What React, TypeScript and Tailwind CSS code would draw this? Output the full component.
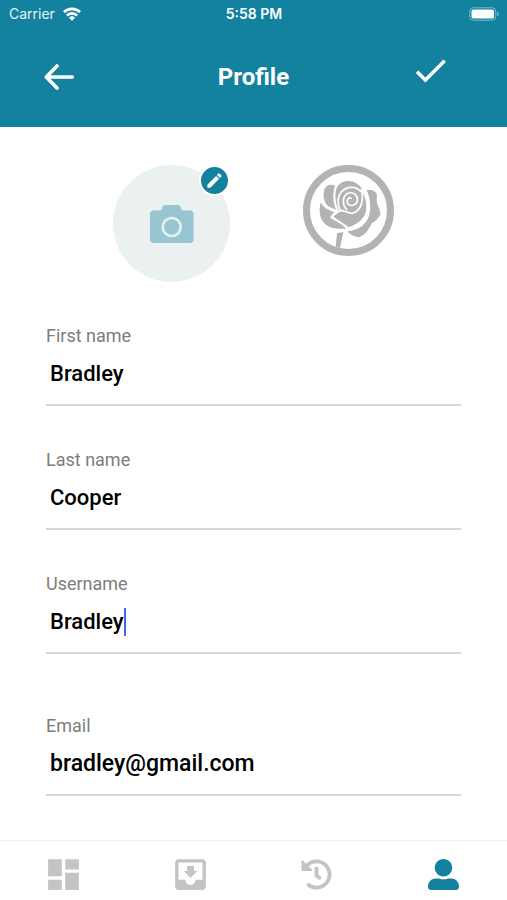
import { useState } from "react";
import { FaHistory, FaUserAlt } from "react-icons/fa";
import { MdCheck, MdDashboard, MdModeEdit, MdMoveToInbox } from "react-icons/md";

type FieldKey = "firstName" | "lastName" | "username" | "email";

const FIELDS: { key: FieldKey; label: string; type: string }[] = [
  { key: "firstName", label: "First name", type: "text" },
  { key: "lastName", label: "Last name", type: "text" },
  { key: "username", label: "Username", type: "text" },
  { key: "email", label: "Email", type: "email" },
];

const TABS = [
  { name: "Dashboard", Icon: MdDashboard, size: 41 },
  { name: "Inbox", Icon: MdMoveToInbox, size: 41 },
  { name: "History", Icon: FaHistory, size: 31 },
  { name: "Profile", Icon: FaUserAlt, size: 31 },
];

function StatusBar() {
  return (
    <div className="grid grid-cols-3 items-center h-7 pl-[9px] pr-2 font-['Inter',sans-serif] text-sm text-white">
      <div className="flex items-center gap-2">
        <span className="opacity-90">Carrier</span>
        <svg width="18" height="14" viewBox="0 0 18 14" fill="none" stroke="currentColor" strokeWidth="2.6">
          <path d="M.9 5.2a11.5 11.5 0 0 1 16.2 0" />
          <path d="M3.8 8.5a7.4 7.4 0 0 1 10.4 0" />
          <path d="M9 13.8l-3-3.1a4.3 4.3 0 0 1 6 0z" fill="currentColor" stroke="none" />
        </svg>
      </div>
      <span className="text-center font-semibold">5:58 PM</span>
      <svg className="justify-self-end" width="30" height="14" viewBox="0 0 30 14">
        <rect x="0.8" y="0.8" width="26" height="12.4" rx="3.6" fill="none" stroke="#fff" strokeOpacity="0.45" />
        <rect x="2.5" y="2.5" width="22.6" height="9" rx="2" fill="#fff" />
        <path d="M28.2 4.8c1.8.6 1.8 3.8 0 4.4z" fill="#fff" fillOpacity="0.5" />
      </svg>
    </div>
  );
}

function CameraIcon() {
  return (
    <svg width="44" height="38" viewBox="0 0 44 38">
      <path
        d="M3.5 5.5h6.3c1 0 1.7-.5 2-1.5l.6-2C12.8.7 13.5 0 15 0h13c1.5 0 2.200.7 2.600 2l.6 2c.3 1 1 1.500 2 1.500h6.800c2.200 0 3.500 1.300 3.500 3.500v25.500c0 2.200-1.300 3.500-3.500 3.500h-36.500C1.300 38 0 36.700 0 34.500V9c0-2.200 1.300-3.500 3.500-3.500z"
        fill="#96c6d2"
      />
      <circle cx="21.7" cy="22" r="9" fill="none" stroke="#ebf0f1" strokeWidth="2.6" />
    </svg>
  );
}

function RoseIcon() {
  return (
    <svg width="91" height="91" viewBox="26 29 273 273" fill="#b3b3b3">
      <circle cx="162.5" cy="165.5" r="126" fill="none" stroke="#b3b3b3" strokeWidth="21" />
      {/* outer petals */}
      <path d="M122 91C106 84 92 92 89 107c-4 20 2 38 16 47l20 9c-9-24-11-48-3-72z" />
      <path d="M79 141c-6 26-4 52 16 67 14 11 36 14 60 12-10-14-30-22-48-33l12-17c-16-5-32-13-40-29z" />
      <path d="M217 105c15-4 29 2 31 16-3 13 0 25 5 35l6 20c-6 12-15 21-27 28-8 19-20 35-38 42-14-2-28-8-34-18 32-4 56-20 64-46 7-24 4-53-7-77z" />
      {/* bud, wrapped by its outer fold */}
      <path d="M126 100c9-24 40-29 60-16 20 12 30 33 29 57l-40 36-41-8c-8-20-15-45-8-69z" />
      {/* front petal */}
      <path
        d="M113 182c11-5 17-15 28-17 12 2 22 10 34 9 20-7 30-28 29-55l-3-17c18 24 24 58 9 84-10 15-29 28-49 32-12-14-34-20-48-36z"
        stroke="#fff"
        strokeWidth="5"
        strokeLinejoin="round"
      />
      <g fill="none" stroke="#fff" strokeWidth="5" strokeLinecap="round">
        <path d="M138 167c-9-20-9-42 3-57 16-18 45-18 57-2" />
        <path d="M157 163c-14-16-13-42 4-49 16-6 30 6 28 21-2 15-22 21-29 9-5-10 3-19 10-15" />
      </g>
      <path d="M128 234l19-4-10 48-13-3z" />
    </svg>
  );
}

interface FieldProps {
  id: string;
  label: string;
  type: string;
  value: string;
  active: boolean;
  onChange: (value: string) => void;
  onFocus: () => void;
}

function Field({ id, label, type, value, active, onChange, onFocus }: FieldProps) {
  return (
    <div className="flex flex-col last:mt-[18px]">
      <label htmlFor={id} className="text-lg leading-6 text-[#7d7d7d]">
        {label}
      </label>
      <div className="flex items-center pt-3 pb-4 pl-1 border-b-2 border-[#d6d6d6]">
        <input
          id={id}
          type={type}
          value={value}
          onChange={(e) => onChange(e.target.value)}
          onFocus={onFocus}
          className={`h-7 p-0 leading-7 font-medium text-black bg-transparent outline-none caret-transparent ${
            type === "email" ? "text-[23px]" : "text-[22px]"
          } ${active ? "field-sizing-content" : "w-full"}`}
        />
        {active && <span className="w-0.5 h-7 bg-[#4169e1]" />}
      </div>
    </div>
  );
}

export default function App() {
  const [profile, setProfile] = useState<Record<FieldKey, string>>({
    firstName: "Bradley",
    lastName: "Cooper",
    username: "Bradley",
    email: "bradley@gmail.com",
  });
  const [activeField, setActiveField] = useState<FieldKey>("username");
  const [tab, setTab] = useState("Profile");

  return (
    <div className="flex flex-col min-h-screen bg-white font-['Roboto',sans-serif]">
      <header className="bg-[#13829e]">
        <StatusBar />
        <div className="grid grid-cols-3 items-center px-11 pt-[22px] pb-6">
          <button type="button" aria-label="Back" className="justify-self-start">
            <svg width="31" height="26" viewBox="0 0 31 26" fill="none" stroke="#fff" strokeWidth="3.6" strokeLinecap="round" strokeLinejoin="round">
              <path d="M28.3 13H2.5M13 2L2.3 13 13 24" />
            </svg>
          </button>
          <h1 className="text-2xl font-bold text-white text-center">Profile</h1>
          <button type="button" aria-label="Save" className="justify-self-end pr-3 pb-3 text-white">
            <MdCheck size={41} />
          </button>
        </div>
      </header>

      <main className="flex-1 px-[46px] pt-[38px] pb-10">
        <div className="flex justify-center gap-[73px]">
          <button
            type="button"
            aria-label="Change photo"
            className="relative flex items-center justify-center size-[117px] rounded-full bg-[#ebf0f1]"
          >
            <CameraIcon />
            <span className="absolute top-0 right-0 flex items-center justify-center size-[31px] rounded-full border-2 border-white bg-[#13829e] text-white">
              <MdModeEdit size={19} />
            </span>
          </button>
          <RoseIcon />
        </div>

        <form className="flex flex-col gap-[42px] mt-[42px]">
          {FIELDS.map((field) => (
            <Field
              key={field.key}
              id={field.key}
              label={field.label}
              type={field.type}
              value={profile[field.key]}
              active={activeField === field.key}
              onChange={(value) => setProfile({ ...profile, [field.key]: value })}
              onFocus={() => setActiveField(field.key)}
            />
          ))}
        </form>
      </main>

      <nav className="grid grid-cols-4 h-15 pt-2 border-t border-[#f0f0f0]">
        {TABS.map(({ name, Icon, size }) => (
          <button
            key={name}
            type="button"
            aria-label={name}
            onClick={() => setTab(name)}
            className={`flex items-center justify-center ${tab === name ? "text-[#13829e]" : "text-[#c4c4c4]"}`}
          >
            <Icon size={size} />
          </button>
        ))}
      </nav>
    </div>
  );
}
